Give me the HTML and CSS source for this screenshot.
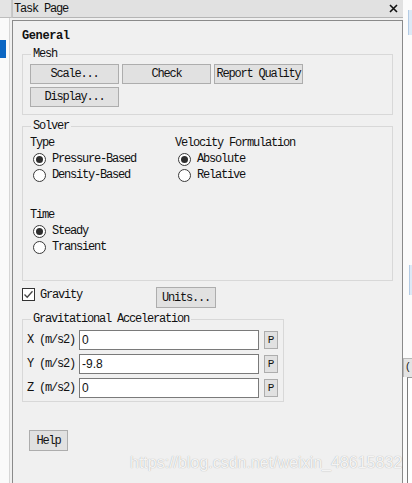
FILE: index.html
```html
<!DOCTYPE html>
<html lang="en">
<head>
    <meta charset="UTF-8" />
    <title>Task Page</title>
    <link rel="stylesheet" href="styles.css">
</head>
<body>
    <div class="screen">
        <div class="side-left">
            <div class="side-head"></div>
            <div class="side-body">
                <div class="side-sel"></div>
            </div>
        </div>

        <div class="task">
            <div class="task-title">
                <span>Task Page</span>
                <svg class="close" width="9" height="9" viewBox="0 0 9 9">
                    <path d="M1 1 L8 8 M8 1 L1 8" stroke="#111" stroke-width="1.6" fill="none"/>
                </svg>
            </div>
            <div class="task-panel">
                <h1>General</h1>

                <fieldset class="group mesh">
                    <legend>Mesh</legend>
                    <div class="btn-grid">
                        <button>Scale...</button>
                        <button>Check</button>
                        <button>Report Quality</button>
                        <button>Display...</button>
                    </div>
                </fieldset>

                <fieldset class="group solver">
                    <legend>Solver</legend>
                    <div class="solver-body">
                        <div class="cols">
                            <div class="col">
                                <div class="field-label">Type</div>
                                <div class="radio on"><span class="radio-mark"></span>Pressure-Based</div>
                                <div class="radio"><span class="radio-mark"></span>Density-Based</div>
                            </div>
                            <div class="col">
                                <div class="field-label">Velocity Formulation</div>
                                <div class="radio on"><span class="radio-mark"></span>Absolute</div>
                                <div class="radio"><span class="radio-mark"></span>Relative</div>
                            </div>
                        </div>
                        <div class="time">
                            <div class="field-label">Time</div>
                            <div class="radio on"><span class="radio-mark"></span>Steady</div>
                            <div class="radio"><span class="radio-mark"></span>Transient</div>
                        </div>
                    </div>
                </fieldset>

                <div class="gravity-row">
                    <div class="check-label">
                        <span class="check-box">
                            <svg width="11" height="11" viewBox="0 0 11 11">
                                <path d="M1.5 5.5 L4.2 8.3 L9.5 2.2" stroke="#444" stroke-width="1.3" fill="none"/>
                            </svg>
                        </span>
                        Gravity
                    </div>
                    <button class="units">Units...</button>
                </div>

                <fieldset class="group accel">
                    <legend>Gravitational Acceleration</legend>
                    <div class="accel-body">
                        <div class="accel-row">
                            <span>X (m/s2)</span>
                            <input type="text" value="0">
                            <button class="p-btn">P</button>
                        </div>
                        <div class="accel-row">
                            <span>Y (m/s2)</span>
                            <input type="text" value="-9.8">
                            <button class="p-btn">P</button>
                        </div>
                        <div class="accel-row">
                            <span>Z (m/s2)</span>
                            <input type="text" value="0">
                            <button class="p-btn">P</button>
                        </div>
                    </div>
                </fieldset>

                <button class="help">Help</button>
            </div>
        </div>

        <div class="side-right">
            <div class="sr-tab"></div>
            <div class="sr-tab second"></div>
            <div class="sr-bar">(</div>
            <div class="sr-box"></div>
        </div>

        <div class="watermark">https://blog.csdn.net/weixin_48615832</div>
    </div>
</body>
</html>
```

FILE: styles.css
```css
*,
*:before,
*:after{
    box-sizing: border-box;
}
body{
    margin: 0;
    background-color: #f0f0f0;
    font-family: "Liberation Mono", "Courier New", Cousine, monospace;
    font-size: 12px;
    letter-spacing: -1.2px;
    color: #111111;
}
.screen{
    position: relative;
    display: flex;
    width: 412px;
    height: 483px;
    overflow: hidden;
}

/* left neighbour pane */
.side-left{
    width: 12px;
    flex: none;
    display: flex;
    flex-direction: column;
}
.side-head{
    height: 18px;
    background-color: #e4e4e4;
    border-bottom: 1px solid #bdbdbd;
    border-right: 1px solid #c9c9c9;
}
.side-body{
    flex: 1;
    width: 10px;
    padding-top: 22px;
    background-color: #fafafa;
    border-right: 1px solid #d6d6d6;
}
.side-sel{
    width: 6px;
    height: 18px;
    background-color: #0b66c3;
}

/* task page */
.task{
    width: 391px;
    flex: none;
    display: flex;
    flex-direction: column;
}
.task-title{
    height: 18px;
    display: flex;
    align-items: center;
    justify-content: space-between;
    padding: 0 5px 0 1px;
    background-color: #e1e1e1;
    border-left: 1px solid #c4c4c4;
    border-bottom: 1px solid #b5b5b5;
    line-height: 16px;
}
.task-panel{
    flex: 1;
    margin-top: 2px;
    padding: 7px 9px 0 9px;
    border: 1px solid #8a8a8a;
    border-bottom: none;
}
h1{
    margin: 0;
    font-size: 12px;
    line-height: 16px;
    font-weight: bold;
    letter-spacing: -0.4px;
}

.group{
    margin: 0;
    padding: 0;
    min-width: 0;
    border: 1px solid #d8d8d8;
}
.group legend{
    margin-left: 8px;
    padding: 0 2px;
    line-height: 12px;
}

button{
    height: 20px;
    padding: 0;
    font: inherit;
    letter-spacing: inherit;
    color: inherit;
    background-color: #e1e1e1;
    border: 1px solid #adadad;
    border-radius: 0;
}

.mesh{
    margin-top: 4px;
}
.btn-grid{
    display: grid;
    grid-template-columns: repeat(3, 89px);
    gap: 3px;
    padding: 4px 0 7px 7px;
}

.solver{
    margin-top: 5px;
}
.solver-body{
    padding: 3px 0 25px 7px;
}
.cols{
    display: flex;
}
.col{
    width: 145px;
}
.field-label{
    line-height: 16px;
}
.radio{
    display: flex;
    align-items: center;
    gap: 6px;
    height: 16px;
    padding-left: 3px;
}
.radio-mark{
    width: 13px;
    height: 13px;
    display: grid;
    place-items: center;
    border: 1px solid #3a3a3a;
    border-radius: 50%;
    background-color: #ffffff;
}
.radio.on .radio-mark:after{
    content: "";
    width: 7px;
    height: 7px;
    border-radius: 50%;
    background-color: #2e2e2e;
}
.time{
    margin-top: 24px;
}

.gravity-row{
    display: flex;
    align-items: flex-start;
    margin-top: 6px;
}
.check-label{
    width: 134px;
    height: 15px;
    display: flex;
    align-items: center;
    gap: 5px;
}
.check-box{
    width: 13px;
    height: 13px;
    display: grid;
    place-items: center;
    border: 1px solid #333333;
    background-color: #ffffff;
}
.units{
    width: 60px;
    height: 21px;
}

.accel{
    width: 262px;
    margin-top: 5px;
}
.accel-body{
    display: flex;
    flex-direction: column;
    gap: 4px;
    padding: 5px 5px 3px 4px;
}
.accel-row{
    display: flex;
    align-items: center;
    height: 20px;
}
.accel-row span{
    width: 52px;
}
.accel-row input{
    width: 180px;
    height: 20px;
    padding: 0 2px;
    border: 1px solid #7a7a7a;
    border-radius: 0;
    outline: none;
    background-color: #ffffff;
    font-family: "Liberation Sans", sans-serif;
    font-size: 12px;
    letter-spacing: 0;
    color: #111111;
}
.p-btn{
    width: 14px;
    height: 18px;
    margin-left: 5px;
    font-size: 11px;
    letter-spacing: 0;
}

.help{
    display: block;
    width: 39px;
    height: 21px;
    margin: 28px 0 0 7px;
}

/* right neighbour pane */
.side-right{
    width: 9px;
    flex: none;
    display: flex;
    flex-direction: column;
    padding-top: 10px;
    background-color: #fbfbfb;
}
.sr-tab{
    height: 25px;
    margin-left: 5px;
    background-color: #dde9f6;
    border-left: 1px solid #b3cbe4;
}
.sr-tab.second{
    height: 30px;
    margin-top: 230px;
    margin-left: 6px;
}
.sr-bar{
    height: 19px;
    margin-top: 63px;
    padding-left: 1px;
    background-color: #e4e4e4;
    border-top: 1px solid #b8b8b8;
    border-left: 1px solid #b8b8b8;
    line-height: 18px;
    font-size: 10px;
    letter-spacing: 0;
}
.sr-box{
    flex: 1;
    margin-left: 4px;
    background-color: #ffffff;
    border-left: 1px solid #7c7c7c;
    border-top: 1px solid #9a9a9a;
}

.watermark{
    position: absolute;
    left: 130px;
    top: 454px;
    font-family: "Liberation Sans", sans-serif;
    font-size: 16px;
    line-height: 18px;
    letter-spacing: 0;
    color: rgba(255,255,255,0.9);
    text-shadow: 0 0 1px rgba(0,0,0,0.35);
    white-space: nowrap;
}
```
